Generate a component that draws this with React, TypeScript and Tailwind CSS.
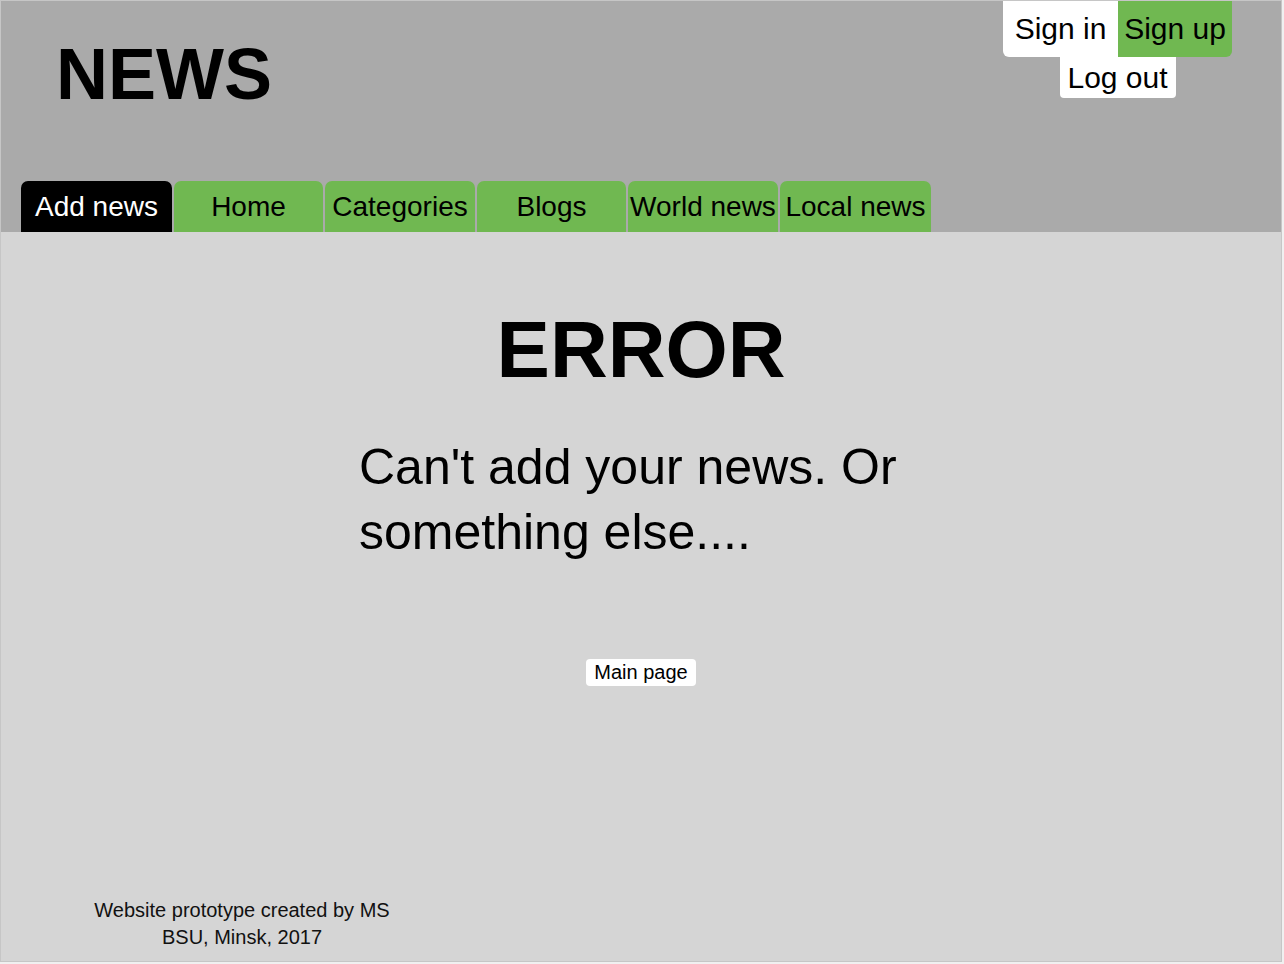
export default function App() {
  const tabs: [string, string][] = [
    ["Home", "w-[149px]"],
    ["Categories", "w-[150px]"],
    ["Blogs", "w-[149px]"],
    ["World news", "w-[150px]"],
    ["Local news", "w-[151px]"],
  ];
  return (
    <div className="w-[1284px] h-[964px] bg-[#f0f0f0]" style={{ fontFamily: '"Liberation Sans", Arial, sans-serif' }}>
      <div className="w-[1282px] h-[962px] border border-[#c6c6c6] flex flex-col bg-[#d5d5d5]">
        <header className="h-[231px] bg-[#aaaaaa] flex flex-col">
          <div className="flex justify-between">
            <div className="pl-[55px] pt-[37px] text-[72px] leading-[72px] font-bold text-black">NEWS</div>
            <div className="flex flex-col items-center mr-[49px]">
              <div className="flex">
                <button className="w-[115px] h-[56px] bg-white rounded-bl-[6px] text-[30px] leading-[56px] text-black text-center">Sign in</button>
                <button className="w-[114px] h-[56px] bg-[#70b851] rounded-br-[6px] text-[30px] leading-[56px] text-black text-center">Sign up</button>
              </div>
              <button className="w-[116px] h-[41px] bg-white rounded-b-[4px] text-[30px] leading-[41px] text-black text-center">Log out</button>
            </div>
          </div>
          <nav className="mt-auto flex gap-[2px] pl-[20px]">
            <div className="w-[151px] h-[51px] bg-black text-white rounded-t-[7px] text-[28px] leading-[51px] text-center whitespace-nowrap">Add news</div>
            {tabs.map(([t, w]) => (
              <div key={t} className={`${w} h-[51px] bg-[#70b851] text-black rounded-t-[7px] text-[28px] leading-[51px] text-center whitespace-nowrap`}>{t}</div>
            ))}
          </nav>
        </header>
        <main className="flex-1 flex flex-col items-center">
          <h1 className="mt-[78px] text-[80px] leading-[80px] font-bold text-black">ERROR</h1>
          <p className="mt-[45px] w-[564px] text-[50px] leading-[65px] text-black text-left">Can't add your news. Or something else....</p>
          <button className="mt-[94px] h-[27px] px-[8px] bg-white rounded-[4px] text-[20px] leading-[27px] text-black">Main page</button>
          <footer className="mt-auto mb-[10px] self-start ml-[41px] w-[400px] text-center text-[20px] leading-[27px] text-[#111]">
            Website prototype created by MS<br />BSU, Minsk, 2017
          </footer>
        </main>
      </div>
    </div>
  );
}
